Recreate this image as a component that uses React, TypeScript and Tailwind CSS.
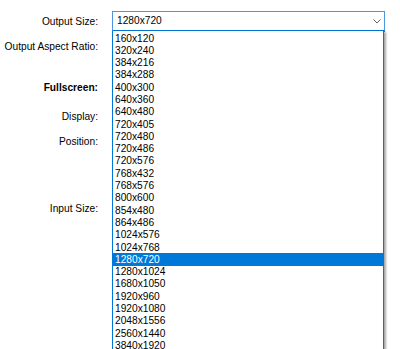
import React from "react";

const sizes = [
  "160x120", "320x240", "384x216", "384x288", "400x300", "640x360", "640x480",
  "720x405", "720x480", "720x486", "720x576", "768x432", "768x576", "800x600",
  "854x480", "864x486", "1024x576", "1024x768", "1280x720", "1280x1024",
  "1680x1050", "1920x960", "1920x1080", "2048x1556", "2560x1440", "3840x1920",
];

const selected = "1280x720";

const App = () => {
  return (
    <main
      className="relative h-[349px] w-[400px] overflow-hidden bg-white text-[10.2px] text-black"
      style={{ fontFamily: '"Liberation Sans", Arial, sans-serif' }}
    >
      <div className="flex">
        {/* labels */}
        <div className="flex w-[98px] flex-col items-end pt-[16px] leading-[12px]">
          <span>Output Size:</span>
          <span className="mt-[13px]">Output Aspect Ratio:</span>
          <span className="mt-[29px] font-bold">Fullscreen:</span>
          <span className="mt-[17px]">Display:</span>
          <span className="mt-[13px]">Position:</span>
          <span className="mt-[55px]">Input Size:</span>
        </div>

        {/* combobox */}
        <div className="ml-[14px] mt-[11px] flex h-[21px] w-[273px] items-center justify-between border border-b-2 border-[#4a97e0] border-b-[#0078d7] pl-[4px] pr-[3px]">
          <span className="leading-[12px]">{selected}</span>
          <svg width="8" height="5" viewBox="0 0 8 5" fill="none">
            <path d="M0.5 0.5 L4 4 L7.5 0.5" stroke="#606060" strokeWidth="1" />
          </svg>
        </div>
      </div>

      {/* dropdown list */}
      <div className="absolute left-[112px] top-[31px] h-[330px] w-[272px] border-x border-[#0078d7] bg-white pt-[1px] shadow-[2px_1px_2px_rgba(0,0,0,0.35)]">
        {sizes.map((s) => (
          <div
            key={s}
            className={
              s === selected
                ? "flex h-[12.3px] items-center bg-[#0078d7] pl-[2px] text-white"
                : "flex h-[12.3px] items-center pl-[2px]"
            }
          >
            {s}
          </div>
        ))}
      </div>
    </main>
  );
};

export default App;
